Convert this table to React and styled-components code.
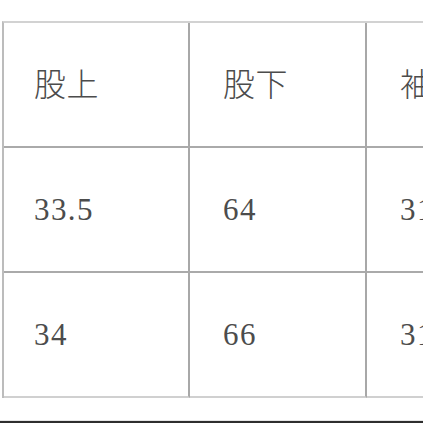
import React from "react";
import styled, { createGlobalStyle } from "styled-components";

const Global = createGlobalStyle`
  html, body { margin: 0; padding: 0; background: #ffffff; overflow: hidden; }
  body { width: 423px; height: 423px; }
`;

const Page = styled.div`
  width: 423px;
  height: 423px;
  overflow: hidden;
  padding: 21px 0 0 2px;
  box-sizing: border-box;
  display: flex;
  flex-direction: column;
`;

const Table = styled.div`
  display: grid;
  grid-template-columns: 186px 177px 177px;
  grid-auto-rows: 125px;
  border-top: 2px solid #d2d2d2;
  border-left: 2px solid #bcbcbc;
  width: max-content;
`;

const Cell = styled.div`
  box-sizing: border-box;
  display: flex;
  align-items: center;
  padding-left: ${(p) => (p.$first ? "30px" : "33px")};
  border-right: 2px solid #a8a8a8;
  border-bottom: 2px solid ${(p) => (p.$last ? "#d0d0d0" : "#aaaaaa")};
  color: #4c4c4c;
  white-space: nowrap;
`;

const HeadText = styled.span`
  font-family: "Noto Sans CJK JP", "Noto Sans CJK SC", sans-serif;
  font-weight: 300;
  font-size: 32px;
  letter-spacing: 0.5px;
  margin-top: -6px;
`;

const NumText = styled.span`
  font-family: "Liberation Serif", "DejaVu Serif", serif;
  font-size: 31px;
  letter-spacing: 1.4px;
  margin-top: 1px;
`;

const BottomBar = styled.div`
  margin-top: 22px;
  margin-left: -2px;
  height: 3px;
  border-top: 1px solid #e6e6e6;
  background: #2e2e2e;
  box-sizing: border-box;
`;

const headers = ["股上", "股下", "袖丈"];
const rows = [
  ["33.5", "64", "31"],
  ["34", "66", "31"],
];

export default function App() {
  return (
    <>
      <Global />
      <Page>
        <Table>
          {headers.map((h, i) => (
            <Cell key={"h" + i} $first={i === 0}>
              <HeadText>{h}</HeadText>
            </Cell>
          ))}
          {rows.map((r, ri) =>
            r.map((v, ci) => (
              <Cell
                key={ri + "-" + ci}
                $first={ci === 0}
                $last={ri === rows.length - 1}
              >
                <NumText>{v}</NumText>
              </Cell>
            ))
          )}
        </Table>
        <BottomBar />
      </Page>
    </>
  );
}
